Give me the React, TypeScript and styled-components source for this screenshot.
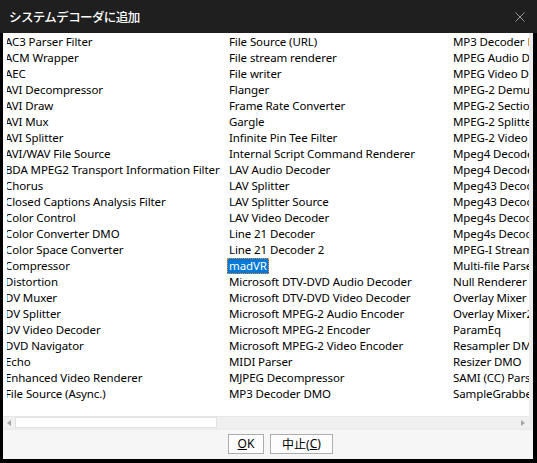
import styled, { createGlobalStyle } from "styled-components";

const GlobalStyle = createGlobalStyle`
  html, body {
    margin: 0;
    padding: 0;
    background: #000;
  }
  body {
    font-family: "Noto Sans", "Noto Sans CJK JP", sans-serif;
  }
`;

const col1 = [
  "AC3 Parser Filter",
  "ACM Wrapper",
  "AEC",
  "AVI Decompressor",
  "AVI Draw",
  "AVI Mux",
  "AVI Splitter",
  "AVI/WAV File Source",
  "BDA MPEG2 Transport Information Filter",
  "Chorus",
  "Closed Captions Analysis Filter",
  "Color Control",
  "Color Converter DMO",
  "Color Space Converter",
  "Compressor",
  "Distortion",
  "DV Muxer",
  "DV Splitter",
  "DV Video Decoder",
  "DVD Navigator",
  "Echo",
  "Enhanced Video Renderer",
  "File Source (Async.)",
];

const col2 = [
  "File Source (URL)",
  "File stream renderer",
  "File writer",
  "Flanger",
  "Frame Rate Converter",
  "Gargle",
  "Infinite Pin Tee Filter",
  "Internal Script Command Renderer",
  "LAV Audio Decoder",
  "LAV Splitter",
  "LAV Splitter Source",
  "LAV Video Decoder",
  "Line 21 Decoder",
  "Line 21 Decoder 2",
  "madVR",
  "Microsoft DTV-DVD Audio Decoder",
  "Microsoft DTV-DVD Video Decoder",
  "Microsoft MPEG-2 Audio Encoder",
  "Microsoft MPEG-2 Encoder",
  "Microsoft MPEG-2 Video Encoder",
  "MIDI Parser",
  "MJPEG Decompressor",
  "MP3 Decoder DMO",
];

const col3 = [
  "MP3 Decoder Filter",
  "MPEG Audio Decoder",
  "MPEG Video Decoder",
  "MPEG-2 Demultiplexer",
  "MPEG-2 Sections and Tables",
  "MPEG-2 Splitter",
  "MPEG-2 Video Stream Analyzer",
  "Mpeg4 Decoder DMO",
  "Mpeg4 Decoder DMO",
  "Mpeg43 Decoder DMO",
  "Mpeg43 Decoder DMO",
  "Mpeg4s Decoder DMO",
  "Mpeg4s Decoder DMO",
  "MPEG-I Stream Splitter",
  "Multi-file Parser",
  "Null Renderer",
  "Overlay Mixer",
  "Overlay Mixer2",
  "ParamEq",
  "Resampler DMO",
  "Resizer DMO",
  "SAMI (CC) Parser",
  "SampleGrabber",
];

const filters = [...col1, ...col2, ...col3];

const Window = styled.div`
  width: 537px;
  height: 463px;
  display: flex;
  flex-direction: column;
  background: #000;
`;

const TitleBar = styled.div`
  height: 33px;
  flex: none;
  display: flex;
  align-items: center;
  justify-content: space-between;
  padding: 0 12px 0 9px;
  background: #1f1f1f;
`;

const Title = styled.div`
  color: #fff;
  font-family: "Noto Sans CJK JP", sans-serif;
  font-size: 12.5px;
  font-weight: 500;
  letter-spacing: -0.6px;
`;

const CloseButton = styled.div`
  width: 10px;
  height: 10px;
  display: flex;
`;

const Client = styled.div`
  flex: 1;
  display: flex;
  flex-direction: column;
  margin: 0 4px 4px 3px;
  background: #ececec;
`;

const ListBox = styled.div`
  height: 395px;
  display: flex;
  flex-direction: column;
  background: #fff;
  margin-right: 4px;
`;

const ListArea = styled.div`
  flex: 1;
  padding-left: 4px;
  display: flex;
  min-height: 0;
`;

const Viewport = styled.div`
  flex: 1;
  overflow: hidden;
`;

const Columns = styled.div`
  display: grid;
  grid-auto-flow: column;
  grid-template-rows: repeat(23, 16px);
  grid-auto-columns: 224px;
  padding-top: 1px;
  margin-left: -4px;
  width: max-content;
`;

const Item = styled.div`
  display: flex;
  align-items: center;
  white-space: nowrap;
`;

const Label = styled.span<{ $selected?: boolean }>`
  padding: 0 2px;
  height: 16px;
  line-height: 16px;
  font-size: 11.5px;
  letter-spacing: -0.1px;
  color: ${(p) => (p.$selected ? "#fff" : "#000")};
  background: ${(p) => (p.$selected ? "#0078d7" : "transparent")};
  outline: ${(p) => (p.$selected ? "1px dotted #ff8728" : "none")};
  outline-offset: -1px;
`;

const ScrollBar = styled.div`
  height: 11px;
  flex: none;
  display: flex;
  background: #f0f0f0;
  border-top: 1px solid #e6e6e6;
`;

const Arrow = styled.div`
  width: 12px;
  display: flex;
  align-items: center;
  justify-content: center;
`;

const Track = styled.div`
  flex: 1;
  display: flex;
`;

const Thumb = styled.div`
  width: 200px;
  background: #fff;
  border: 1px solid #e2e2e2;
`;

const ButtonPanel = styled.div`
  flex: 1;
  margin-top: 2px;
  display: flex;
  align-items: center;
  justify-content: center;
  gap: 6px;
  padding-left: 25px;
  padding-bottom: 2px;
  background: #f6f6f6;
`;

const Button = styled.button<{ $w: number }>`
  width: ${(p) => p.$w}px;
  height: 20px;
  padding: 0;
  background: #fdfdfd;
  border: 1px solid #adadad;
  font-family: "Noto Sans", "Noto Sans CJK JP", sans-serif;
  font-size: 12px;
  color: #000;
  display: flex;
  align-items: center;
  justify-content: center;
`;

const Mnemonic = styled.span`
  text-decoration: underline;
`;

const Triangle = ({ dir }: { dir: "left" | "right" }) => (
  <svg width="4" height="6" viewBox="0 0 4 6">
    <path d={dir === "left" ? "M4 0 L0 3 L4 6 Z" : "M0 0 L4 3 L0 6 Z"} fill="#a6a6a6" />
  </svg>
);

export default function App() {
  return (
    <>
      <GlobalStyle />
      <Window>
        <TitleBar>
          <Title>システムデコーダに追加</Title>
          <CloseButton>
            <svg width="10" height="10" viewBox="0 0 10 10">
              <path d="M0.5 0.5 L9.5 9.5 M9.5 0.5 L0.5 9.5" stroke="#9a9a9a" strokeWidth="1" />
            </svg>
          </CloseButton>
        </TitleBar>
        <Client>
          <ListBox>
            <ListArea>
              <Viewport>
                <Columns>
                  {filters.map((name, i) => (
                    <Item key={i}>
                      <Label $selected={name === "madVR"}>{name}</Label>
                    </Item>
                  ))}
                </Columns>
              </Viewport>
            </ListArea>
            <ScrollBar>
              <Arrow>
                <Triangle dir="left" />
              </Arrow>
              <Track>
                <Thumb />
              </Track>
              <Arrow>
                <Triangle dir="right" />
              </Arrow>
            </ScrollBar>
          </ListBox>
          <ButtonPanel>
            <Button $w={36}>
              <Mnemonic>O</Mnemonic>K
            </Button>
            <Button $w={63}>
              中止(<Mnemonic>C</Mnemonic>)
            </Button>
          </ButtonPanel>
        </Client>
      </Window>
    </>
  );
}
